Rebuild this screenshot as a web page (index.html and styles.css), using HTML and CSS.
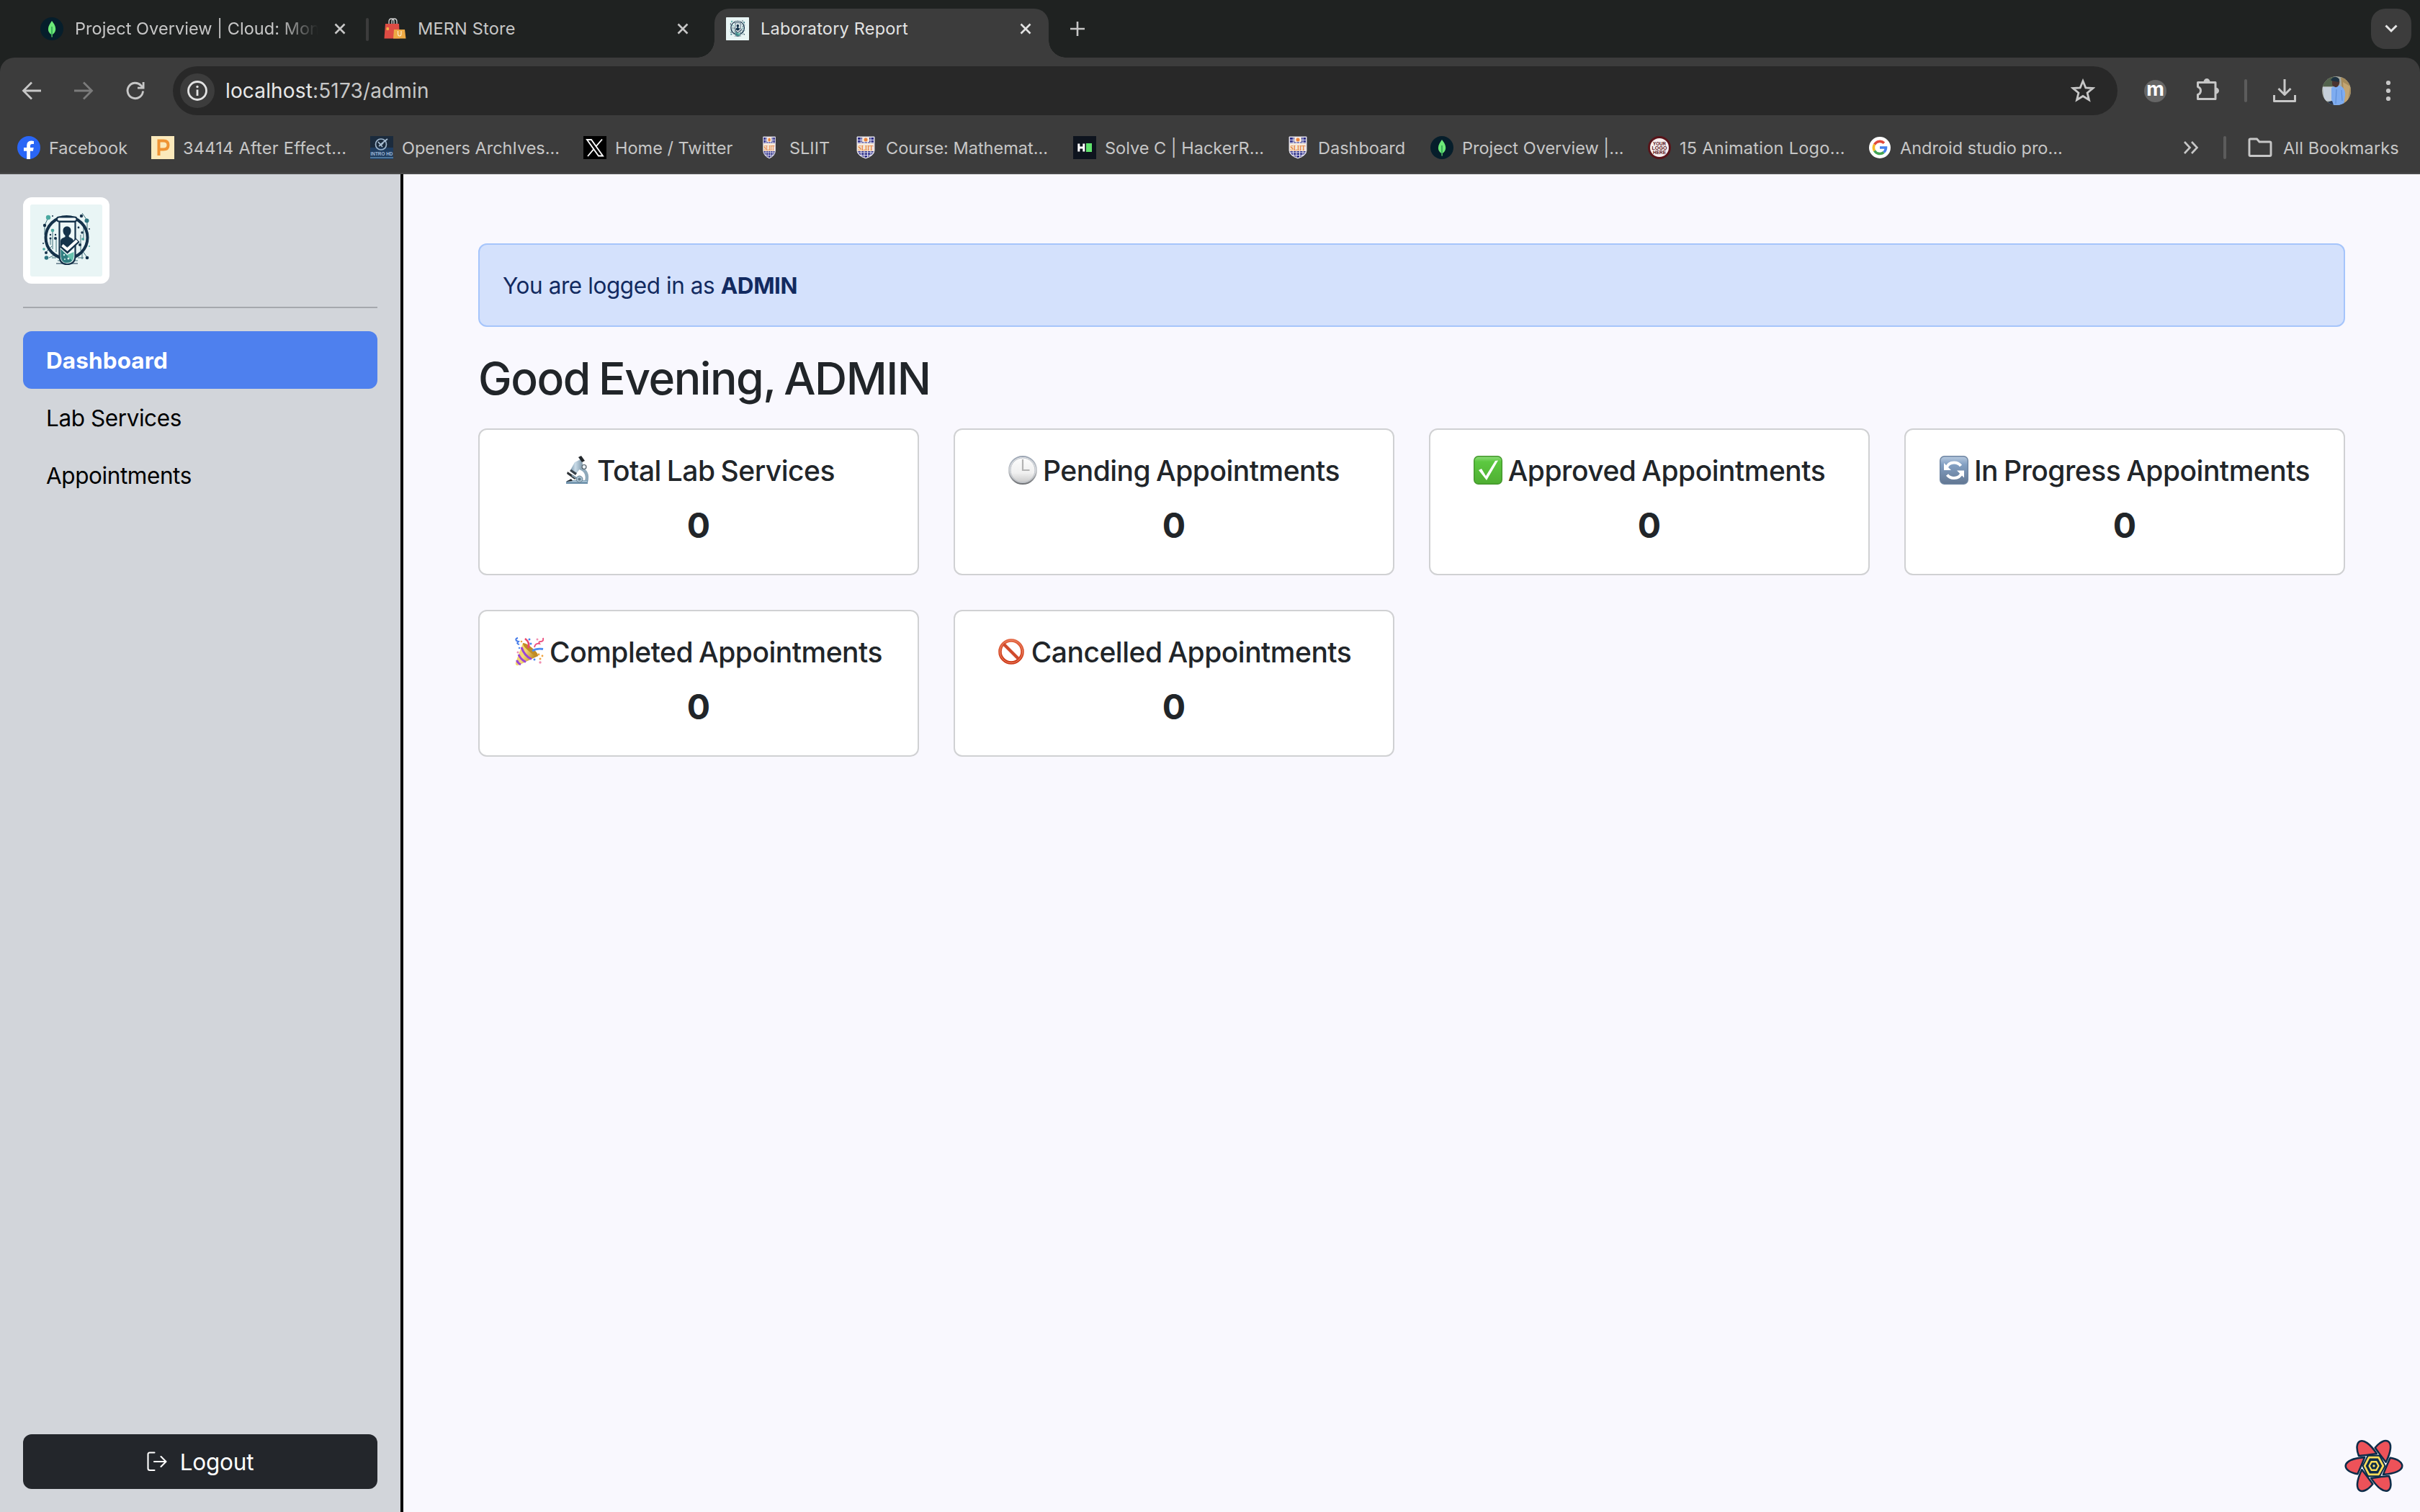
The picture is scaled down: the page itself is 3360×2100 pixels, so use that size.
FILE: index.html
```html
<!DOCTYPE html>
<html lang="en">
<head>
<meta charset="utf-8">
<title>Laboratory Report</title>
<link rel="stylesheet" href="styles.css">
</head>
<body>
<svg class="defs" width="0" height="0">
  <symbol id="mongo" viewBox="0 0 32 32">
    <circle cx="16" cy="16" r="16" fill="#061e2b"/>
    <path d="M16 5C19 9 21.500 12.500 21.200 17C21 20.500 19 22.500 16.700 24.200V27.500H15.500V24.200C13 22.500 10.800 20 10.900 16.500C11 12 13.500 9 16 5Z" fill="#6cea78"/>
    <path d="M16 13V25" stroke="#1d8a4c" stroke-width="1.200"/>
  </symbol>
  <symbol id="close" viewBox="0 0 16 16"><path d="M1.500 1.500L14.500 14.500M14.500 1.500L1.500 14.500" stroke="currentColor" stroke-width="2.600" fill="none"/></symbol>
  <symbol id="lab" viewBox="0 0 100 100">
    <rect width="100" height="100" rx="2" fill="#e9f5f5"/>
    <g stroke="#3d6e78" stroke-width="1" fill="none">
      <path d="M25 18L20 29V42M79 22V34M72 12L79 22M31 36V62M36 46V66M28 46V56M70 42V64M74 30V50M22 66L30 58M26 74L34 70M72 76V66M78 72L72 64M36 74H30M66 74H74M38 78H66"/>
    </g>
    <circle cx="50.500" cy="46" r="29" fill="none" stroke="#15324a" stroke-width="4"/>
    <g fill="#15324a"><circle cx="20" cy="29" r="2.200"/><circle cx="71" cy="16" r="2.200"/><circle cx="22" cy="67" r="2"/><circle cx="79" cy="74" r="2.300"/><circle cx="28" cy="47" r="1.500"/><circle cx="35" cy="47" r="2"/><circle cx="72" cy="39" r="1.700"/><circle cx="69" cy="56" r="2"/><circle cx="67" cy="32" r="1.400"/><circle cx="28" cy="42" r="1.200"/><circle cx="35" cy="42" r="1.200"/><circle cx="18" cy="54" r="1"/><circle cx="82" cy="34" r="1"/><circle cx="31" cy="16" r="1"/></g>
    <g fill="#4aa9a0"><circle cx="25" cy="18" r="3.200"/><circle cx="31" cy="36" r="2.300"/><circle cx="19" cy="62" r="1.800"/><circle cx="73" cy="48" r="1.800"/><circle cx="82" cy="58" r="1"/></g>
    <g fill="#2d7480"><circle cx="78.500" cy="22.500" r="3"/><circle cx="22.500" cy="74" r="2.800"/></g>
    <path d="M36 82H66" stroke="#15324a" stroke-width="1"/>
    <path d="M40.500 24V71Q40.500 83 51 83Q62.500 83 62.500 71V24Z" fill="#eef8f8" stroke="#15324a" stroke-width="2.200"/>
    <path d="M42.500 62L51 70L60.500 66V72Q60 81 51 81Q43 81 42.500 72Z" fill="#67c2ae"/>
    <path d="M42.500 62L58 78Q55 81 51 81Q43 81 42.500 72Z" fill="#2f7c80"/>
    <g fill="#dff7f0"><circle cx="47" cy="70" r="1.200"/><circle cx="53" cy="75" r="1.500"/><circle cx="48" cy="76" r="1"/></g>
    <rect x="37" y="17.500" width="27.500" height="6" rx="3" fill="#f2fafa" stroke="#15324a" stroke-width="2"/>
    <path d="M51 30.500C54.500 30.500 56.500 33 56.500 36.500C56.500 39.500 55.500 41.500 53.700 43V45C56 46.500 60 47 60 51V58H42V51C42 47 46 46.500 48.500 45V43C46.500 41.500 45.500 39.500 45.500 36.500C45.500 33 47.500 30.500 51 30.500Z" fill="#15324a"/>
    <path d="M43.500 56.500L51.500 63.500L66 49.500" fill="none" stroke="#15324a" stroke-width="7.500"/>
    <path d="M44.500 56.500L51.500 62.500L65 50" fill="none" stroke="#fff" stroke-width="3.800"/>
  </symbol>
  <symbol id="shield" viewBox="0 0 26 32">
    <path d="M1 1H25V20Q25 27 13 31Q1 27 1 20Z" fill="#eeeaf2" stroke="#d6d5e4" stroke-width="1"/>
    <path d="M2 2H24V20Q24 26 13 30Q2 26 2 20Z" fill="#2b2c86"/>
    <path d="M6.500 2V27M11 2V29M15.500 2V29M20 2V27M2 5.500H24M2 9H24M2 23H24M4 26.500H22" stroke="#e6e4f2" stroke-width="1"/>
    <rect x="8" y="1.500" width="10" height="6.500" fill="#f6eadf"/><circle cx="13" cy="5" r="2.500" fill="#e8823c"/>
    <rect x="1.500" y="10" width="23" height="11" fill="#f5e9dc"/>
    <text x="13" y="19.800" font-family="Liberation Serif, serif" font-weight="700" font-size="11" text-anchor="middle" textLength="21" lengthAdjust="spacingAndGlyphs" fill="#e58035">SLIIT</text>
  </symbol>
  <linearGradient id="gSilver" x1="0" y1="0" x2="0" y2="1"><stop offset="0" stop-color="#9ba5b3"/><stop offset=".5" stop-color="#c9ccd0"/><stop offset="1" stop-color="#6f7276"/></linearGradient>
  <linearGradient id="gFace" x1="0" y1="0" x2="0" y2="1"><stop offset="0" stop-color="#fdfdfd"/><stop offset=".6" stop-color="#f0f0f0"/><stop offset="1" stop-color="#c4c4c4"/></linearGradient>
  <linearGradient id="gGreen" x1="0" y1="0" x2="0" y2="1"><stop offset="0" stop-color="#8fdd7c"/><stop offset=".2" stop-color="#5cc840"/><stop offset="1" stop-color="#4fae32"/></linearGradient>
  <linearGradient id="gBlue" x1="0" y1="0" x2="0" y2="1"><stop offset="0" stop-color="#b9cbe0"/><stop offset=".3" stop-color="#83a0c3"/><stop offset="1" stop-color="#627792"/></linearGradient>
  <linearGradient id="gRed" x1="0" y1="0" x2="0" y2="1"><stop offset="0" stop-color="#e2633f"/><stop offset="1" stop-color="#cc3614"/></linearGradient>
  <linearGradient id="gCone" x1="0" y1="0" x2="1" y2=".4"><stop offset="0" stop-color="#f7d65c"/><stop offset=".5" stop-color="#f3d774"/><stop offset="1" stop-color="#b9821f"/></linearGradient>
  <linearGradient id="gScope" x1="0" y1="0" x2="1" y2="0"><stop offset="0" stop-color="#7793a8"/><stop offset=".4" stop-color="#c9dbe8"/><stop offset="1" stop-color="#7f99ab"/></linearGradient>
</svg>

<header class="browser">
  <div class="tabs">
    <div class="tab">
      <svg class="fav"><use href="#mongo"/></svg>
      <span class="tab-title faded">Project Overview | Cloud: Mon</span>
      <svg class="close"><use href="#close"/></svg>
    </div>
    <div class="tab ruled">
      <svg class="fav" viewBox="0 0 32 32"><path d="M8 10V6Q8 2 11.500 2Q15 2 15 6V10M12 10V6Q12 2 15.500 2Q19 2 19 6V10" fill="none" stroke="#d5d5d5" stroke-width="1.300"/><path d="M3 9H22L23 29.500H1.500Z" fill="#de4c44"/><rect x="4.500" y="14" width="3.500" height="4" rx="1" fill="#f0b24b"/><path d="M15 17H30L31.500 29.500H14Z" fill="#eda944"/><path d="M20.500 19V23Q20.500 26 22.800 26Q25 26 25 23V19" fill="none" stroke="#fbe9c8" stroke-width="1.200"/></svg>
      <span class="tab-title">MERN Store</span>
      <svg class="close"><use href="#close"/></svg>
    </div>
    <div class="tab active">
      <svg class="fav"><use href="#lab"/></svg>
      <span class="tab-title">Laboratory Report</span>
      <svg class="close"><use href="#close"/></svg>
    </div>
    <svg class="plus" viewBox="0 0 20 20"><path d="M10 0V20M0 10H20" stroke="currentColor" stroke-width="2.600"/></svg>
    <div class="tab-menu"><svg width="18" height="12" viewBox="0 0 18 12"><path d="M1.500 1.500L9 9L16.500 1.500" fill="none" stroke="#e6e6e6" stroke-width="3"/></svg></div>
  </div>

  <div class="toolbar">
    <svg class="nav-icon" viewBox="0 0 32 32"><path d="M29 16H5M16 4.500L4.500 16L16 27.500" fill="none" stroke="#c7c7c7" stroke-width="2.800"/></svg>
    <svg class="nav-icon" viewBox="0 0 32 32"><path d="M3 16H27M16 4.500L27.500 16L16 27.500" fill="none" stroke="#7b7b7b" stroke-width="2.800"/></svg>
    <svg class="nav-icon" viewBox="0 0 32 32"><path d="M26.500 16.500A10.700 10.700 0 1 1 23.500 8.500L27 12" fill="none" stroke="#c7c7c7" stroke-width="2.900"/><path d="M28.500 4V13.500H19V10.700H25.700V4Z" fill="#c7c7c7"/></svg>
    <div class="omnibox">
      <span class="info"><svg width="30" height="30" viewBox="0 0 30 30"><circle cx="15" cy="15" r="12.500" fill="none" stroke="#e3e3e3" stroke-width="2.800"/><path d="M15 13.500V22" stroke="#e3e3e3" stroke-width="2.800"/><circle cx="15" cy="9.500" r="1.700" fill="#e3e3e3"/></svg></span>
      <span class="url"><b>localhost</b>:5173/admin</span>
      <svg class="star" viewBox="0 0 34 34"><path d="M17 3.500L20.800 12.800L30.800 13.500L23.100 20L25.500 29.800L17 24.500L8.500 29.800L10.900 20L3.200 13.500L13.200 12.800Z" fill="none" stroke="#c7c7c7" stroke-width="2.800"/></svg>
    </div>
    <span class="ext-m">m</span>
    <svg class="ext" viewBox="0 0 36 36"><path d="M5.500 8.500H30V31.500H5.500V25.500Q9.500 24 9.500 20Q9.500 16 5.500 14.500Z" fill="none" stroke="#c7c7c7" stroke-width="3" stroke-linejoin="round"/><path d="M13.500 8A4.500 5 0 0 1 22.500 8ZM30 15.500A5 4.500 0 0 1 30 24.500Z" fill="#c7c7c7"/></svg>
    <i class="rule"></i>
    <svg class="dl" viewBox="0 0 32 32"><path d="M16 0V21M7.500 13L16 21.500L24.500 13M1.500 22V30.500H30.500V22" fill="none" stroke="#c7c7c7" stroke-width="3" stroke-linejoin="round"/></svg>
    <svg class="avatar" viewBox="0 0 40 40"><clipPath id="av"><circle cx="20" cy="20" r="20"/></clipPath><g clip-path="url(#av)"><rect width="40" height="40" fill="#a6aaa2"/><path d="M0 0H16V14H0Z" fill="#52624c"/><path d="M1 15H15V34H3Z" fill="#c6cfda"/><path d="M26 0H40V40H30Z" fill="#a58a5a"/><path d="M29 8L39 14L36 34L31 36Z" fill="#c3a572"/><path d="M13 16Q20 10 27 14Q33 18 32 27L30 40H16L13 32Z" fill="#7eacf0"/><path d="M20 18L19 38M27 19L28 34" stroke="#5d8fda" stroke-width="1.200"/><path d="M14 5Q18-1 23 3Q26 9 22 14Q18 17 14 12Z" fill="#4b3430"/><path d="M12 5Q18-3 24 4L23 8L13 6Z" fill="#1d3242"/><path d="M7 36L14 34L16 40H8Z" fill="#26354f"/></g></svg>
    <svg class="dots" viewBox="0 0 8 30"><circle cx="4" cy="4" r="3.100" fill="#c7c7c7"/><circle cx="4" cy="15" r="3.100" fill="#c7c7c7"/><circle cx="4" cy="26" r="3.100" fill="#c7c7c7"/></svg>
  </div>

  <div class="bookmarks">
    <div class="bm bm-186"><svg class="fav" viewBox="0 0 32 32"><circle cx="16" cy="16" r="16" fill="#2a66f6"/><path d="M13.200 32V20.800H9V16H13.200V13Q13.200 6.500 19.500 6.500Q21.500 6.500 23 6.900V11H20.500Q18 11 18 13.500V16H22.700L21.900 20.800H18V32Z" fill="#fff"/></svg><span>Facebook</span></div>
    <div class="bm bm-304"><svg class="fav" viewBox="0 0 32 32"><rect width="32" height="32" fill="#fbe9bb"/><path d="M10.500 27V6.500H17Q23.500 6.500 23.500 12.500Q23.500 18.500 17 18.500H12" fill="none" stroke="#ef9334" stroke-width="4"/></svg><span class="wide">34414 After Effect...</span></div>
    <div class="bm bm-296"><svg class="fav" viewBox="0 0 32 32"><rect width="32" height="32" fill="#1b2b3d"/><rect y="16" width="32" height="16" fill="#1f3d60"/><circle cx="15" cy="11.500" r="7.500" fill="none" stroke="#9fb6cc" stroke-width="1.700"/><path d="M24 4L14 12M11 8L17 15M12 14L18 10" stroke="#a9bfd3" stroke-width="1.800"/><text x="16" y="26.500" font-family="Liberation Sans, sans-serif" font-weight="700" font-size="6.500" text-anchor="middle" textLength="31" lengthAdjust="spacingAndGlyphs" fill="#9fb9d8">INTRO HD</text><path d="M0 30H32" stroke="#7cb0d8" stroke-width="1"/></svg><span>Openers ArchIves...</span></div>
    <div class="bm bm-242"><svg class="fav" viewBox="0 0 32 32"><rect width="32" height="32" fill="#000"/><path d="M5 5H11L27 27.500H21ZM26 4.500L17 15M14.500 18L6 28" fill="none" stroke="#fff" stroke-width="1.900"/></svg><span>Home / Twitter</span></div>
    <div class="bm bm-134"><svg class="fav" viewBox="0 0 32 32"><g transform="translate(7 0) scale(.7 1)"><use href="#shield" width="26" height="32"/></g></svg><span>SLIIT</span></div>
    <div class="bm bm-304"><svg class="fav"><use href="#shield"/></svg><span>Course: Mathemat...</span></div>
    <div class="bm bm-296"><svg class="fav" viewBox="0 0 32 32"><rect width="32" height="32" fill="#0e141e"/><path d="M7.800 10.500V21.500M14.800 10.500V21.500M7.800 16H14.800" stroke="#fff" stroke-width="3"/><rect x="18" y="10" width="8" height="12" fill="#5fe26c"/></svg><span>Solve C | HackerR...</span></div>
    <div class="bm bm-200"><svg class="fav"><use href="#shield"/></svg><span>Dashboard</span></div>
    <div class="bm bm-302"><svg class="fav"><use href="#mongo"/></svg><span>Project Overview |...</span></div>
    <div class="bm bm-306"><svg class="fav" viewBox="0 0 32 32"><circle cx="16" cy="16" r="16" fill="#591419"/><circle cx="16" cy="16" r="13" fill="#f6efef"/><g font-family="Liberation Sans, sans-serif" font-weight="700" font-size="7.500" text-anchor="middle" fill="#591419"><text x="16" y="13" textLength="18" lengthAdjust="spacingAndGlyphs">YOUR</text><text x="16" y="19" textLength="21" lengthAdjust="spacingAndGlyphs">LOGO</text><text x="16" y="25" textLength="18" lengthAdjust="spacingAndGlyphs">HERE</text></g></svg><span class="wide">15 Animation Logo...</span></div>
    <div class="bm bm-302"><svg class="fav" viewBox="0 0 32 32"><circle cx="16" cy="16" r="15" fill="#fff"/><g fill="none" stroke-width="3.600"><path d="M22 9.700A8.600 8.600 0 0 0 8.600 11.700" stroke="#e04a3c"/><path d="M8.600 11.700A8.600 8.600 0 0 0 8.600 20.300" stroke="#f6bb28"/><path d="M8.600 20.300A8.600 8.600 0 0 0 21.500 22.500" stroke="#43a454"/><path d="M21.500 22.500A8.600 8.600 0 0 0 24.500 16H16" stroke="#4580ec"/></g></svg><span>Android studio pro...</span></div>
    <svg class="more" viewBox="0 0 22 20"><path d="M2 2L9.500 10L2 18M12 2L19.500 10L12 18" fill="none" stroke="#c7c7c7" stroke-width="2.600"/></svg>
    <i class="rule"></i>
    <svg class="folder" viewBox="0 0 34 28"><path d="M2 24V3.500Q2 2 3.500 2H12.500L16 6H30.500Q32 6 32 7.500V24Q32 25.500 30.500 25.500H3.500Q2 25.500 2 24Z" fill="none" stroke="#c7c7c7" stroke-width="2.900"/></svg>
    <span class="all">All Bookmarks</span>
  </div>
</header>

<div class="app">
  <aside class="sidebar">
    <svg class="brand"><use href="#lab"/></svg>
    <hr>
    <nav>
      <a class="link current">Dashboard</a>
      <a class="link">Lab Services</a>
      <a class="link">Appointments</a>
    </nav>
    <button class="logout"><svg width="28" height="28" viewBox="0 0 28 28"><path d="M10.500 1.500H4Q1.500 1.500 1.500 4V23.500Q1.500 26 4 26H10.500M10 14H26M19.500 7L26.500 14L19.500 21" fill="none" stroke="#fff" stroke-width="2.100" stroke-linecap="round" stroke-linejoin="round"/></svg><span>Logout</span></button>
  </aside>

  <main class="content">
    <div class="alert"><span>You are logged in as <b>ADMIN</b></span></div>
    <h1>Good Evening, ADMIN</h1>
    <section class="cards">
      <article class="card"><h2><svg class="emoji" viewBox="0 0 40 40"><path d="M24 17Q37 22 33 36" fill="none" stroke="#8fa9ba" stroke-width="4.500"/><path d="M5 36L8 34H35V39H5Z" fill="#6f92ac"/><path d="M8 35.500H34" stroke="#b7cede" stroke-width="1.500"/><path d="M7 22L19 30L17 33L6 25Z" fill="#2d3236"/><path d="M13 27L22 33" stroke="#7f98a8" stroke-width="2.500"/><circle cx="23.500" cy="32.500" r="4.500" fill="#a7bfce" stroke="#647d8e" stroke-width="1"/><circle cx="23.500" cy="32.500" r="2" fill="#61788a"/><path d="M18 9L28 4L29 13L20 25L12 20Z" fill="url(#gScope)" transform="translate(-1 0)"/><path d="M12 19L20 24L18 27L10 21Z" fill="#38424b"/><path d="M22 2L26 0L31 7L27 9Z" fill="#22272b"/><circle cx="30" cy="15.500" r="3" fill="#e8f0f5" stroke="#4e5b64" stroke-width="1.200"/><path d="M5 36L12 32L14 35Z" fill="#23292e"/></svg><span>Total Lab Services</span></h2><p>0</p></article>
      <article class="card"><h2><svg class="emoji" viewBox="0 0 40 40"><circle cx="20" cy="20" r="19" fill="url(#gFace)" stroke="url(#gSilver)" stroke-width="2"/><circle cx="20" cy="20" r="17" fill="none" stroke="#b7bdc5" stroke-width="1"/><path d="M20 5V20H29.500" fill="none" stroke="#b3b3b3" stroke-width="2.200"/></svg><span>Pending Appointments</span></h2><p>0</p></article>
      <article class="card"><h2><svg class="emoji" viewBox="0 0 40 40"><rect x=".7" y=".7" width="38.600" height="38.600" rx="6" fill="url(#gGreen)" stroke="#43962b" stroke-width="1.400"/><path d="M7 20L11 18L17 28L30 7L34 6.500L18 34Z" fill="#fff"/></svg><span>Approved Appointments</span></h2><p>0</p></article>
      <article class="card"><h2><svg class="emoji" viewBox="0 0 40 40"><rect x=".7" y=".7" width="38.600" height="38.600" rx="6" fill="url(#gBlue)" stroke="#6d84a1" stroke-width="1.400"/><path d="M9.500 17Q12 9.500 20 9.500Q26 9.500 29.500 14" fill="none" stroke="#fff" stroke-width="4"/><path d="M30.500 24Q28 31 20 31Q14 31 10.500 26.500" fill="none" stroke="#fff" stroke-width="4"/><path d="M6 10V20H16ZM34 30.500V20.500H24Z" fill="#fff"/></svg><span>In Progress Appointments</span></h2><p>0</p></article>
      <article class="card"><h2><svg class="emoji" viewBox="0 0 40 40"><path d="M11 8L32 26L5 39Q0 40 1 35Z" fill="url(#gCone)"/><path d="M11 8Q16 8 24 15Q33 23 32 26Q29 28 20 20Q10 12 11 8Z" fill="#c18c25"/><path d="M9 14Q13 26 23 30.500M5 24Q8 31 15 34.500M2.500 32Q4 36 8 38" fill="none" stroke="#9a44d8" stroke-width="3"/><path d="M18 15Q22 8 14 2" fill="none" stroke="#e9486c" stroke-width="2.600"/><path d="M24 19Q30 15 39 16.500" fill="none" stroke="#4f8df2" stroke-width="2.800"/><path d="M4 1Q0 2 2 5L5 6Q1 9 6 10" fill="none" stroke="#3f77e8" stroke-width="1.900"/><path d="M39 1Q40 6 36 6Q32 6 34 9Q28 8 27 14" fill="none" stroke="#ec5180" stroke-width="1.900"/><g fill="#4b86ee"><circle cx="20" cy="3" r="1.500"/><circle cx="22" cy="9" r="1.500"/><circle cx="27" cy="31" r="1.500"/><circle cx="6" cy="15" r="1.200"/></g><g fill="#f08fb0"><circle cx="35" cy="35" r="1.700"/><circle cx="31" cy="3" r="1.500"/><circle cx="4" cy="21" r="1.500"/></g><g fill="#f0a544"><circle cx="35" cy="30" r="1.500"/><circle cx="38" cy="26" r="1.400"/><circle cx="33" cy="24" r="1.400"/><circle cx="9" cy="6" r="1.300"/></g></svg><span>Completed Appointments</span></h2><p>0</p></article>
      <article class="card"><h2><svg class="emoji" viewBox="0 0 40 40"><circle cx="20" cy="20" r="15.500" fill="none" stroke="url(#gRed)" stroke-width="4.600"/><path d="M9 9L31 31" stroke="#d04a2c" stroke-width="4.400"/><circle cx="20" cy="20" r="15.800" fill="none" stroke="#ec8a6c" stroke-width="1"/></svg><span>Cancelled Appointments</span></h2><p>0</p></article>
    </section>
    <svg class="query-badge" viewBox="107 89 242 218">
      <g fill="#ed5259" stroke="#0d2c49" stroke-width="7.500" stroke-linejoin="round">
        <path id="petal" d="M295 165C327 170 344 184 344 198C344 216 315 230 266 233C274 213 284 188 295 165Z"/>
        <use href="#petal" transform="rotate(60 228 198)"/><use href="#petal" transform="rotate(120 228 198)"/><use href="#petal" transform="rotate(180 228 198)"/><use href="#petal" transform="rotate(240 228 198)"/><use href="#petal" transform="rotate(300 228 198)"/>
      </g>
      <path d="M179 198L202 152H253L277 198L253 244H202Z" fill="#0d2c49"/>
      <g fill="none" stroke="#fbdb5a" stroke-linejoin="round"><path d="M190 198L208 163H247L266 198L247 233H208Z" stroke-width="8"/><path d="M209 198L218 181H238L247 198L238 215H218Z" stroke-width="7"/></g>
      <circle cx="228" cy="198" r="5" fill="#fbdb5a"/>
    </svg>
  </main>
</div>
</body>
</html>
```
FILE: styles.css
```css
* { box-sizing: border-box; }

body {
  margin: 0;
  width: 3360px;
  height: 2100px;
  overflow: hidden;
  display: flex;
  flex-direction: column;
  font-family: Inter, "Liberation Sans", sans-serif;
  color: #212529;
}

.defs { position: absolute; }
svg { display: block; flex: none; }
span { white-space: nowrap; }
.fav { width: 32px; height: 32px; }

/* browser frame */
.browser {
  height: 242px;
  flex: none;
  background: #1f2221;
  color: #c7c7c7;
  font-size: 23.5px;
}

.tabs {
  height: 80px;
  padding: 12px 12px 0 40px;
  display: flex;
  align-items: flex-start;
}

.tab {
  position: relative;
  width: 476px;
  height: 56px;
  padding: 0 36px 0 16px;
  display: flex;
  align-items: center;
}
.tab-title { width: 340px; margin-left: 16px; overflow: hidden; line-height: 40px; letter-spacing: .2px; }
.faded {
  letter-spacing: .05px;
  -webkit-mask-image: linear-gradient(90deg, #000 285px, transparent 338px);
  mask-image: linear-gradient(90deg, #000 285px, transparent 338px);
}
.close { width: 16px; height: 16px; margin-left: 20px; }

.ruled::before {
  content: "";
  position: absolute;
  left: -8px;
  top: 13px;
  width: 4px;
  height: 32px;
  border-radius: 2px;
  background: #3c3c3c;
}

.tab.active {
  width: 464px;
  height: 68px;
  padding: 0 24px 12px 16px;
  border-radius: 20px 20px 0 0;
  background: #3c3c3c;
  color: #e3e3e3;
}
.tab.active::before, .tab.active::after {
  content: "";
  position: absolute;
  bottom: 0;
  width: 24px;
  height: 24px;
}
.tab.active::before { left: -24px; background: radial-gradient(circle at 0 0, transparent 23.500px, #3c3c3c 24px); }
.tab.active::after { right: -24px; background: radial-gradient(circle at 100% 0, transparent 23.500px, #3c3c3c 24px); }

.plus { width: 20px; height: 20px; margin: 18px 0 0 30px; }
.tab-menu {
  width: 56px;
  height: 56px;
  margin-left: auto;
  border-radius: 20px;
  background: #3c3c3c;
  display: flex;
  align-items: center;
  justify-content: center;
}

.toolbar {
  height: 92px;
  padding-left: 28px;
  border-radius: 20px 20px 0 0;
  background: #3c3c3c;
  display: flex;
  align-items: center;
}
.nav-icon { width: 32px; height: 32px; margin-right: 40px; }
.nav-icon:nth-child(3) { margin-right: 36px; }

.omnibox {
  width: 2700px;
  height: 68px;
  padding: 0 31px 0 10px;
  border-radius: 34px;
  background: #282828;
  display: flex;
  align-items: center;
}
.info {
  width: 48px;
  height: 48px;
  border-radius: 50%;
  background: #3c3c3c;
  display: flex;
  align-items: center;
  justify-content: center;
}
.url { margin-left: 15px; font-size: 28px; letter-spacing: .15px; }
.url b { font-weight: 400; color: #e8e8e8; }
.star { width: 34px; height: 34px; margin-left: auto; }

.ext-m {
  width: 31px;
  height: 31px;
  margin-left: 37px;
  border-radius: 50%;
  background: #666;
  color: #fff;
  font-size: 27px;
  font-weight: 700;
  line-height: 25px;
  text-align: center;
}
.ext { width: 36px; height: 36px; margin: 0 0 4px 38px; }
.rule { width: 4px; height: 32px; border-radius: 2px; background: #5c5c5c; }
.toolbar .rule { margin-left: 34px; }
.dl { width: 32px; height: 32px; margin-left: 36px; }
.avatar { width: 40px; height: 40px; margin-left: 36px; }
.dots { width: 8px; height: 30px; margin-left: 48px; }

.bookmarks {
  height: 70px;
  padding: 0 0 2px 24px;
  border-bottom: 2px solid #4a4a4a;
  background: #3c3c3c;
  display: flex;
  align-items: center;
}
.bm { flex: none; display: flex; align-items: center; gap: 12px; }
.wide { letter-spacing: .28px; }
.bm-134 { width: 134px; }
.bm-186 { width: 186px; }
.bm-200 { width: 200px; }
.bm-242 { width: 242px; }
.bm-296 { width: 296px; }
.bm-302 { width: 302px; }
.bm-304 { width: 304px; }
.bm-306 { width: 306px; }
.more { width: 22px; height: 20px; margin-left: 135px; }
.bookmarks .rule { margin-left: 34px; }
.folder { width: 34px; height: 28px; margin-left: 30px; }
.all { margin-left: 15px; letter-spacing: .15px; }

/* application */
.app { flex: 1; display: flex; font-size: 31.500px; }

.sidebar {
  width: 560px;
  padding: 32px;
  border-right: 4px solid #000;
  background: #d2d5da;
  display: flex;
  flex-direction: column;
}
.brand { width: 120px; height: 120px; padding: 10px; border-radius: 12px; background: #fff; }
.sidebar hr { width: 100%; height: 2px; margin: 32px 0; border: 0; background: #a5a8ad; }
.link {
  display: flex;
  align-items: center;
  height: 80px;
  padding: 0 32px;
  border-radius: 12px;
  color: #000;
  letter-spacing: -.42px;
}
.current { background: #4e80ee; color: #fff; font-weight: 700; letter-spacing: .1px; }
.logout {
  height: 76px;
  margin-top: auto;
  border: 0;
  border-radius: 12px;
  background: #23262b;
  color: #fff;
  font: inherit;
  letter-spacing: -.2px;
  display: flex;
  align-items: center;
  justify-content: center;
  gap: 18px;
}

.content {
  position: relative;
  flex: 1;
  padding: 96px 104px 0;
  background: #f9f8fe;
}
.alert {
  height: 116px;
  padding: 0 32px;
  border: 2px solid #a6c5fb;
  border-radius: 12px;
  background: #d4e1fc;
  color: #122a60;
  letter-spacing: -.42px;
  display: flex;
  align-items: center;
}
h1 {
  height: 93px;
  margin: 32px 0 16px;
  padding-top: 1px;
  font-size: 62.500px;
  font-weight: 500;
  line-height: 77px;
  letter-spacing: -1.5px;
  word-spacing: -3px;
}
.cards { display: grid; grid-template-columns: repeat(4, 612px); gap: 48px; }
.card {
  height: 204px;
  padding-top: 32px;
  border: 2px solid #d0d1d3;
  border-radius: 12px;
  background: #fff;
}
.card h2 {
  height: 48px;
  margin: 0 0 16px;
  display: flex;
  align-items: center;
  justify-content: center;
  gap: 8px;
  font-size: 39px;
  font-weight: 500;
  letter-spacing: -.5px;
  word-spacing: -2px;
}
.emoji { width: 40px; height: 40px; }
.card p { margin: 0; padding-top: 1px; text-align: center; font-size: 48px; font-weight: 700; line-height: 72px; }

.query-badge { position: absolute; right: 23px; bottom: 27px; width: 82px; height: 74px; }
```
